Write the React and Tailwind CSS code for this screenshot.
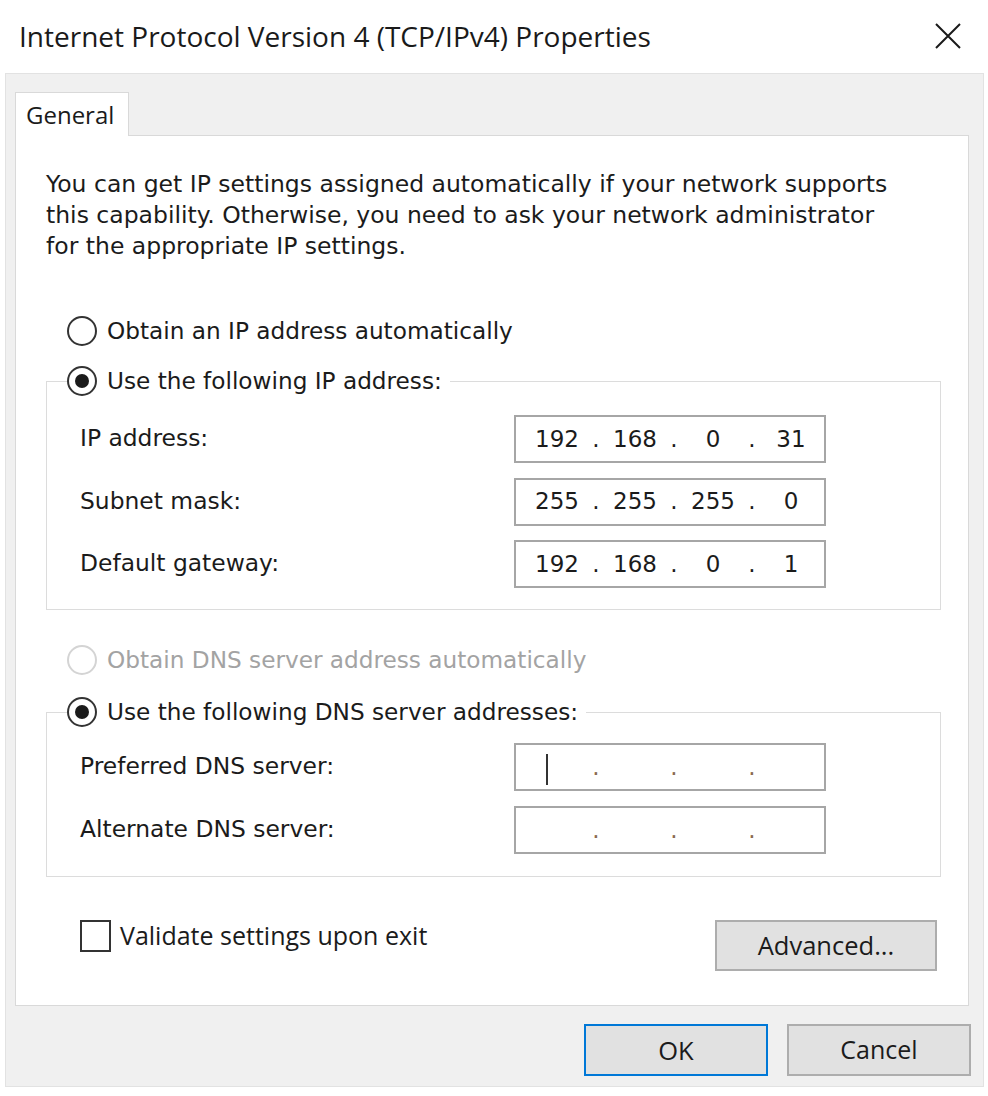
const tahoma = { fontFamily: '"DejaVu Sans", Verdana, sans-serif' }

function Radio({ checked, disabled }) {
  return (
    <span
      className={`flex h-[30px] w-[30px] shrink-0 items-center justify-center rounded-full border-2 bg-white ${
        disabled ? 'border-[#d4d4d4]' : 'border-[#333333]'
      }`}
    >
      {checked && <span className="h-[14px] w-[14px] rounded-full bg-[#1b1b1b]" />}
    </span>
  )
}

function RadioRow({ label, checked, disabled }) {
  return (
    <div className="flex h-[34px] items-center gap-[10px] bg-white pr-[8px]">
      <Radio checked={checked} disabled={disabled} />
      <span
        className={`text-[23.2px] ${disabled ? 'text-[#a3a3a3]' : 'text-[#1b1b1b]'}`}
        style={tahoma}
      >
        {label}
      </span>
    </div>
  )
}

function IpField({ parts, cursor }) {
  return (
    <div
      className="flex h-[48px] w-[312px] items-center border-2 border-[#a6a6a6] bg-white pl-[10px] text-[23px] text-[#1b1b1b]"
      style={tahoma}
    >
      {parts.map((p, i) => (
        <div key={i} className="flex items-center">
          {i > 0 && <span className={`w-[16px] text-center ${cursor !== undefined && !p ? 'text-[#8a6a50]' : ''}`}>.</span>}
          <span className="relative flex w-[62px] justify-center">
            {p}
            {cursor && i === 0 && (
              <span className="absolute top-[-13px] left-[20px] h-[31px] w-[2px] bg-[#333]" />
            )}
          </span>
        </div>
      ))}
    </div>
  )
}

function FieldRow({ label, parts, cursor }) {
  return (
    <div className="flex h-[48px] items-center justify-between pr-[114px]">
      <span className="text-[23.4px] text-[#1b1b1b]" style={tahoma}>
        {label}
      </span>
      <IpField parts={parts} cursor={cursor} />
    </div>
  )
}

function Group({ legend, children, className }) {
  return (
    <fieldset className={`border border-[#dcdcdc] ${className}`}>
      <legend className="ml-[20px]">
        <RadioRow label={legend} checked />
      </legend>
      <div className="pl-[33px]">{children}</div>
    </fieldset>
  )
}

export default function App() {
  return (
    <div className="h-[1096px] w-[988px] bg-white" style={{ fontFamily: '"Open Sans", "Noto Sans", sans-serif' }}>
      {/* Title bar */}
      <div className="flex h-[73px] items-center justify-between pr-[26px] pl-[19px] pb-[2px]">
        <span className="text-[28px] text-[#1a1a1a]">Internet Protocol Version 4 (TCP/IPv4) Properties</span>
        <svg width="28" height="28" viewBox="0 0 28 28" className="text-[#1a1a1a]">
          <path d="M2 2L26 26M26 2L2 26" stroke="currentColor" strokeWidth="2" />
        </svg>
      </div>

      {/* Window body */}
      <div className="ml-[5px] flex h-[1014px] w-[979px] flex-col border border-[#e2e2e2] bg-[#f0f0f0] pt-[18px] pl-[9px]">
        {/* Tab */}
        <div className="relative z-10 -mb-px flex h-[44px] w-[114px] items-center border border-b-0 border-[#d9d9d9] bg-white pl-[10px] text-[24px] text-[#1b1b1b]">
          General
        </div>

        {/* Panel */}
        <div className="flex h-[871px] w-[954px] flex-col border border-[#d9d9d9] bg-white pt-[33px] pr-[27px] pl-[30px]">
          <p className="text-[23.5px] leading-[31px] text-[#1b1b1b]" style={tahoma}>
            You can get IP settings assigned automatically if your network supports
            <br />
            this capability. Otherwise, you need to ask your network administrator
            <br />
            for the appropriate IP settings.
          </p>

          <div className="mt-[52px] pl-[21px]">
            <RadioRow label="Obtain an IP address automatically" />
          </div>

          <Group legend="Use the following IP address:" className="mt-[16px] h-[246px]">
            <div className="mt-[17px] flex flex-col gap-[14.5px]">
              <FieldRow label="IP address:" parts={['192', '168', '0', '31']} />
              <FieldRow label="Subnet mask:" parts={['255', '255', '255', '0']} />
              <FieldRow label="Default gateway:" parts={['192', '168', '0', '1']} />
            </div>
          </Group>

          <div className="mt-[33px] pl-[21px]">
            <RadioRow label="Obtain DNS server address automatically" disabled />
          </div>

          <Group legend="Use the following DNS server addresses:" className="mt-[18px] h-[182px]">
            <div className="mt-[14px] flex flex-col gap-[15px]">
              <FieldRow label="Preferred DNS server:" parts={['', '', '', '']} cursor />
              <FieldRow label="Alternate DNS server:" parts={['', '', '', '']} cursor={false} />
            </div>
          </Group>

          <div className="mt-[42px] flex items-start justify-between pr-[4px] pl-[34px]">
            <label className="flex h-[34px] items-center gap-[9px]">
              <span className="h-[32px] w-[31px] border-2 border-[#333333] bg-white" />
              <span className="text-[25px] text-[#1b1b1b]">Validate settings upon exit</span>
            </label>
            <button className="mt-[1px] h-[51px] w-[222px] border-2 border-[#adadad] bg-[#e1e1e1] text-[25.5px] text-[#1b1b1b]">
              Advanced...
            </button>
          </div>
        </div>

        {/* Footer buttons */}
        <div className="mt-[18px] flex justify-end gap-[19px] pr-[12px]">
          <button className="h-[52px] w-[184px] border-2 border-[#0078d7] bg-[#e1e1e1] text-[25.5px] text-[#1b1b1b]">
            OK
          </button>
          <button className="h-[52px] w-[184px] border-2 border-[#adadad] bg-[#e1e1e1] text-[25px] text-[#1b1b1b]">
            Cancel
          </button>
        </div>
      </div>
    </div>
  )
}
